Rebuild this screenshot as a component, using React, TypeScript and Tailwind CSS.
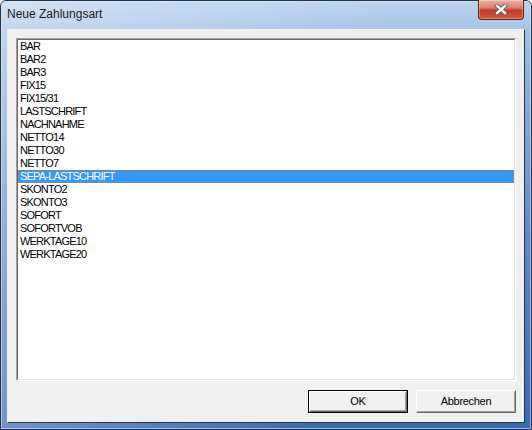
const items = [
  "BAR",
  "BAR2",
  "BAR3",
  "FIX15",
  "FIX15/31",
  "LASTSCHRIFT",
  "NACHNAHME",
  "NETTO14",
  "NETTO30",
  "NETTO7",
  "SEPA-LASTSCHRIFT",
  "SKONTO2",
  "SKONTO3",
  "SOFORT",
  "SOFORTVOB",
  "WERKTAGE10",
  "WERKTAGE20",
];

const selected = "SEPA-LASTSCHRIFT";

function CloseButton() {
  return (
    <div className="-mt-[2px] mr-[6px] w-[46px] h-[20px] rounded-b-[4px] border border-t-0 border-[#5e2015] bg-[linear-gradient(to_bottom,#eab0a4_0%,#dc7f6a_42%,#c23b22_55%,#d25a40_100%)] shadow-[inset_0_0_0_1px_rgba(255,255,255,0.3)] flex items-center justify-center">
      <svg width="14" height="11" viewBox="0 0 14 11">
        <path d="M3 2 L11 9 M11 2 L3 9" stroke="#5a5a5a" strokeWidth="4.2" strokeLinecap="square" />
        <path d="M3 2 L11 9 M11 2 L3 9" stroke="#ffffff" strokeWidth="2.4" strokeLinecap="square" />
      </svg>
    </div>
  );
}

function Button({ label, isDefault }: { label: string; isDefault?: boolean }) {
  return (
    <div className={isDefault ? "w-[100px] h-[23px] border border-black" : "w-[100px] h-[23px]"}>
      <div className="h-full border border-t-white border-l-white border-b-[#696969] border-r-[#696969]">
        <div className="h-full border border-t-[#f0f0f0] border-l-[#f0f0f0] border-b-[#a0a0a0] border-r-[#a0a0a0] bg-[#f0f0f0] flex items-center justify-center text-[11px] tracking-[-0.3px] text-black">
          {label}
        </div>
      </div>
    </div>
  );
}

export default function App() {
  return (
    <div className="w-[532px] h-[430px] rounded-t-[6px] border border-[#25344a] bg-[linear-gradient(100deg,rgba(255,255,255,0.35),rgba(255,255,255,0)_65%),linear-gradient(to_bottom,#bcd3ef,#97b7e0_12%,#5d89c6_55%,#3a69b3)] flex flex-col font-['Liberation_Sans',Arial,sans-serif]">
      <div className="flex-1 flex flex-col rounded-t-[5px] border border-[#dbe7f6]/60">
        {/* title bar */}
        <div className="h-[27px] flex items-start justify-between">
          <span className="pl-[5px] pt-[5px] text-[12px] leading-[14px] text-[#1a1a1a]">Neue Zahlungsart</span>
          <CloseButton />
        </div>

        {/* client area */}
        <div className="flex-1 mx-[5px] mb-[5px] border border-t-[#e9f0f8] border-l-[#e9f0f8] border-b-[#1f3556] border-r-[#1f3556] bg-[#f0f0f0] flex flex-col px-[8px] pt-[8px] pb-[9px] gap-[9px]">
          <div className="flex-1 border border-t-[#a0a0a0] border-l-[#a0a0a0] border-b-white border-r-white">
            <div className="h-full border border-t-[#696969] border-l-[#696969] border-b-[#e3e3e3] border-r-[#e3e3e3] bg-white">
              {items.map((item) => (
                <div
                  key={item}
                  className={
                    item === selected
                      ? "h-[13px] leading-[13px] pl-[2px] text-[11px] tracking-[-0.8px] bg-[#3399ff] text-white outline-1 outline-dotted outline-[#c8782a] -outline-offset-1"
                      : "h-[13px] leading-[13px] pl-[2px] text-[11px] tracking-[-0.8px] text-black"
                  }
                >
                  {item}
                </div>
              ))}
            </div>
          </div>

          <div className="flex justify-end gap-[8px]">
            <Button label="OK" isDefault />
            <Button label="Abbrechen" />
          </div>
        </div>
      </div>
    </div>
  );
}
